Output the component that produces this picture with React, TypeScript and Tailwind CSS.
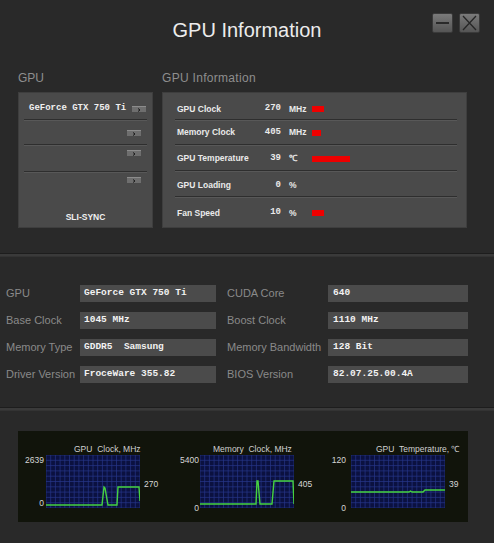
import React from 'react'

const sans = "font-['Liberation_Sans',Arial,sans-serif]"
const mono = "font-['Liberation_Mono','DejaVu_Sans_Mono',monospace]"

const liveRows = [
  { label: 'GPU Clock', value: '270', unit: 'MHz', bar: 'w-[12px]' },
  { label: 'Memory Clock', value: '405', unit: 'MHz', bar: 'w-[9px]' },
  { label: 'GPU Temperature', value: '39', unit: '℃', bar: 'w-[38px]' },
  { label: 'GPU Loading', value: '0', unit: '%', bar: 'w-0' },
  { label: 'Fan Speed', value: '10', unit: '%', bar: 'w-[12px]' },
]

// row heights and small nudges so the text sits where the original does
const liveRowBox = ['h-[21px]', 'h-[25px] pt-[2px]', 'h-[27px] pt-[2px]', 'h-[26px] pt-[4px]', 'h-[30px] pt-[2px]']

const specs = [
  ['GPU', 'GeForce GTX 750 Ti', 'CUDA Core', '640'],
  ['Base Clock', '1045 MHz', 'Boost Clock', '1110 MHz'],
  ['Memory Type', 'GDDR5  Samsung', 'Memory Bandwidth', '128 Bit'],
  ['Driver Version', 'FroceWare 355.82', 'BIOS Version', '82.07.25.00.4A'],
]

function ArrowButton() {
  return (
    <div className="shrink-0 w-[14px] h-[6px] bg-[#6e6e6e] border-t border-[#8c8c8c] flex items-center justify-center">
      <svg width="4" height="4" viewBox="0 0 4 4">
        <path d="M1 0.5 L3 2 L1 3.5" fill="none" stroke="#111" strokeWidth="0.9" />
      </svg>
    </div>
  )
}

function WindowButton({ kind }: { kind: 'min' | 'close' }) {
  return (
    <div className="w-[21px] h-[20px] rounded-[2px] border border-[#3a3a3a] bg-gradient-to-b from-[#7a7a7a] to-[#555555] flex items-center justify-center">
      <svg width="19" height="18" viewBox="0 0 19 18">
        {kind === 'min' ? (
          <rect x="3" y="8" width="13" height="2" fill="#2a2a2a" />
        ) : (
          <path d="M3 2 L16 16 M16 2 L3 16" stroke="#262626" strokeWidth="1.3" />
        )}
      </svg>
    </div>
  )
}

function Chart({
  title,
  titlePad,
  top,
  value,
  points,
  axisPad,
  zeroShift,
  width,
}: {
  title: string
  titlePad: string
  top: string
  value: string
  points: string
  axisPad: string
  zeroShift: string
  width: string
}) {
  const cols = Array.from({ length: 21 }, (_, i) => i * (94 / 20))
  const rows = Array.from({ length: 11 }, (_, i) => i * (53 / 10))
  return (
    <div className={`${width} flex flex-col`}>
      <div className={`${titlePad} h-[12px] leading-[12px] text-[8.5px] text-[#d0d0d0] whitespace-pre`}>{title}</div>
      <div className="flex">
        <div className={`w-[28px] h-[53px] flex flex-col justify-between items-end ${axisPad} text-[8.5px] leading-[10px] text-[#d6d6d6]`}>
          <span>{top}</span>
          <span className={zeroShift}>0</span>
        </div>
        <svg width="94" height="53" viewBox="0 0 94 53" className="block">
          <rect width="94" height="53" fill="#0b1140" />
          {cols.map((x) => (
            <line key={'c' + x} x1={x} y1={0} x2={x} y2={53} stroke="#26368a" strokeWidth="0.7" />
          ))}
          {rows.map((y) => (
            <line key={'r' + y} x1={0} y1={y} x2={94} y2={y} stroke="#26368a" strokeWidth="0.7" />
          ))}
          <polyline points={points} fill="none" stroke="#46d23f" strokeWidth="1.4" />
        </svg>
        <div className="ml-[4px] pt-[24px] text-[8.5px] leading-[10px] text-[#d6d6d6]">{value}</div>
      </div>
    </div>
  )
}

function Separator() {
  return <div className="h-[4px] border-t border-[#1d1d1d] bg-[#3a3a3a] border-b-[1px] border-b-[#333333]" />
}

export default function App() {
  return (
    <div className={`w-[494px] h-[543px] bg-[#292929] overflow-hidden ${sans}`}>
      {/* title bar */}
      <div className="relative h-[62px] pt-[18px] text-center text-[20px] leading-[24px] text-[#ececec]">
        GPU Information
        <div className="absolute right-[14px] top-[13px] flex gap-[6px]">
          <WindowButton kind="min" />
          <WindowButton kind="close" />
        </div>
      </div>

      {/* live panels */}
      <div className="flex pl-[18px] gap-[9px]">
        <div className="w-[135px] flex flex-col">
          <div className="h-[30px] pt-[9px] text-[12px] leading-[14px] text-[#8e8e8e]">GPU</div>
          <div className="h-[136px] bg-[#4a4a4a] border border-[#3e3e3e] pt-[6px] px-[5px] flex flex-col">
            <div className="h-[21px] flex items-center justify-between pl-[5px] pr-[1px] border-b border-[#2e2e2e] shadow-[0_1px_0_#585858]">
              <span className={`whitespace-nowrap ${mono} font-bold text-[9px] text-[#f0f0f0]`}>GeForce GTX 750 Ti</span>
              <ArrowButton />
            </div>
            <div className="h-[25px] flex justify-end items-start pt-[10px] pr-[6px] border-b border-[#2e2e2e] shadow-[0_1px_0_#585858]">
              <ArrowButton />
            </div>
            <div className="h-[27px] flex justify-end items-start pt-[5px] pr-[6px] border-b border-[#2e2e2e] shadow-[0_1px_0_#585858]">
              <ArrowButton />
            </div>
            <div className="flex justify-end items-start pt-[5px] pr-[6px]">
              <ArrowButton />
            </div>
            <div className="mt-[28px] text-center font-bold text-[8.5px] text-[#f0f0f0]">SLI-SYNC</div>
          </div>
        </div>

        <div className="w-[305px] flex flex-col">
          <div className="h-[30px] pt-[9px] text-[12px] leading-[14px] text-[#8e8e8e] tracking-[0.3px]">GPU Information</div>
          <div className="h-[136px] bg-[#4a4a4a] border border-[#3e3e3e] pt-[6px] pl-[12px] pr-[9px] flex flex-col">
            {liveRows.map((r, i) => (
              <div
                key={r.label}
                className={`${liveRowBox[i]} flex items-center pl-[2px] ${i < 4 ? 'border-b border-[#2e2e2e] shadow-[0_1px_0_#585858]' : ''}`}
              >
                <span className="shrink-0 w-[80px] font-bold text-[8.5px] text-[#eaeaea] whitespace-nowrap">{r.label}</span>
                <span className={`shrink-0 w-[24px] text-right ${mono} font-bold text-[9px] text-[#eaeaea]`}>{r.value}</span>
                <span className="shrink-0 w-[31px] pl-[8px] font-bold text-[8.5px] text-[#eaeaea] whitespace-nowrap">{r.unit}</span>
                <span className={`shrink-0 ${r.bar} h-[6px] bg-[#ee0000]`} />
              </div>
            ))}
          </div>
        </div>
      </div>

      <div className="mt-[25px]">
        <Separator />
      </div>

      {/* specs */}
      <div className="mt-[28px] pl-[6px] flex flex-col gap-[10px]">
        {specs.map(([l1, v1, l2, v2]) => (
          <div key={l1} className="flex items-center h-[17px]">
            <span className="w-[74px] text-[11px] text-[#8a8a8a] whitespace-nowrap">{l1}</span>
            <span className={`w-[136px] h-[17px] bg-[#4b4b4b] pl-[4px] flex items-center ${mono} font-bold text-[9.5px] text-[#f2f2f2] whitespace-pre`}>{v1}</span>
            <span className="ml-[11px] w-[101px] text-[11px] text-[#8a8a8a] whitespace-nowrap">{l2}</span>
            <span className={`w-[140px] h-[17px] bg-[#4b4b4b] pl-[5px] flex items-center ${mono} font-bold text-[9.5px] text-[#f2f2f2] whitespace-pre`}>{v2}</span>
          </div>
        ))}
      </div>

      <div className="mt-[24px]">
        <Separator />
      </div>

      {/* charts */}
      <div className="mt-[20px] ml-[18px] w-[450px] h-[91px] bg-[#11140b] pt-[12px] flex">
        <Chart
          width="w-[154px]"
          title="GPU  Clock, MHz"
          titlePad="pl-[56px]"
          top="2639"
          value="270"
          axisPad="pr-[2px]"
          zeroShift=""
          points="0,50 56,50 58,32 59,33 62,50 71,50 72,32 93,32 94,46"
        />
        <Chart
          width="w-[151px]"
          title="Memory  Clock, MHz"
          titlePad="pl-[41px]"
          top="5400"
          value="405"
          axisPad="pr-[1px]"
          zeroShift="mb-[-5px]"
          points="0,49 56,49 57,26 58,26 60,49 72,49 74,26 93,26 94,49"
        />
        <Chart
          width="w-[145px]"
          title="GPU  Temperature, ℃"
          titlePad="pl-[53px]"
          top="120"
          value="39"
          axisPad="pr-[5px]"
          zeroShift="mb-[-5px]"
          points="0,37 58,37 59.5,36 61,37 72,37 74,35 94,35"
        />
      </div>
    </div>
  )
}
